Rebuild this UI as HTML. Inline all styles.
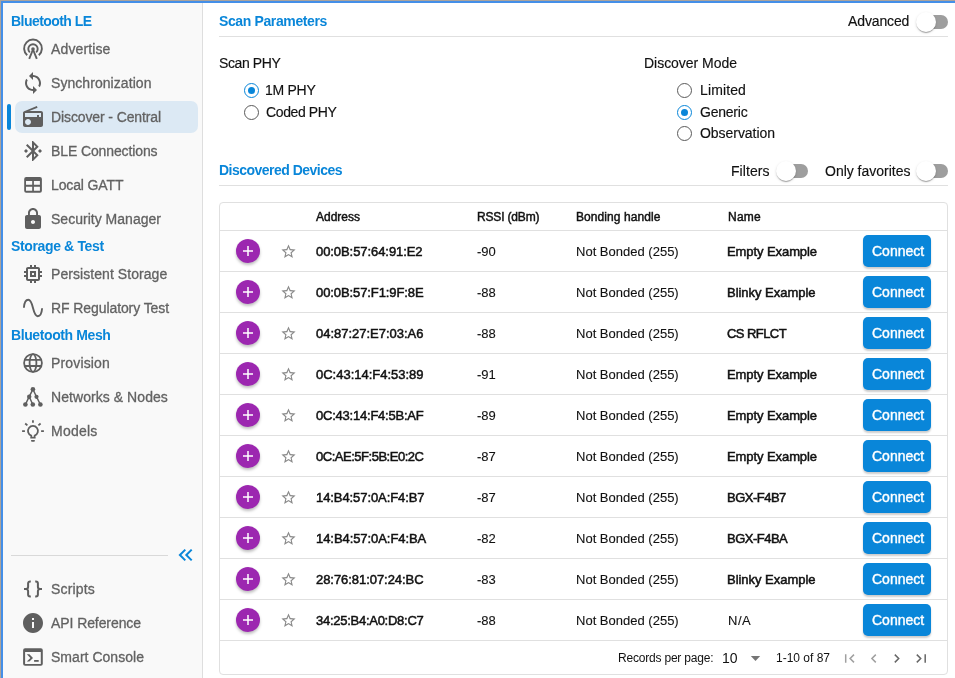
<!DOCTYPE html>
<html><head><meta charset="utf-8"><style>
html,body{margin:0;padding:0;}
body{width:955px;height:678px;overflow:hidden;position:relative;background:#fff;font-family:"Liberation Sans", sans-serif;}
.t{position:absolute;white-space:nowrap;will-change:transform;}
svg{display:block}
</style></head><body>
<div style="position:absolute;left:0px;top:0px;width:955px;height:678px;background:#fff"></div>
<div style="position:absolute;left:3px;top:3px;width:199px;height:675px;background:#f9f9f9"></div>
<div style="position:absolute;left:202px;top:3px;width:1px;height:675px;background:#dedede"></div>
<div class="t" style="left:11px;top:12.65px;font-size:14px;line-height:17px;font-weight:700;color:#0986d9;letter-spacing:-0.551px;">Bluetooth LE</div>
<div style="position:absolute;left:15px;top:101px;width:183px;height:32px;background:#dce9f4;border-radius:7px"></div>
<div style="position:absolute;left:7px;top:104px;width:4px;height:26px;background:#0986d9;border-radius:2px"></div>
<svg style="position:absolute;left:21px;top:37px;color:#5f5f5f" width="24" height="24" viewBox="0 0 24 24" fill="#5f5f5f"><g fill="none" stroke="currentColor" stroke-width="1.9"><path d="M6.2 18.2A8.9 8.9 0 1 1 17.8 18.2"/><path d="M8.8 15.4A4.7 4.7 0 1 1 15.2 15.4"/><path d="M12 12.5L8.2 21.8M12 12.5L15.8 21.8"/></g><circle cx="12" cy="12" r="1.8"/></svg>
<div class="t" style="left:51.3px;top:40.65px;font-size:14px;line-height:17px;font-weight:400;color:#626262;-webkit-text-stroke:0.3px #626262;letter-spacing:0.127px;">Advertise</div>
<svg style="position:absolute;left:21px;top:71px;color:#5f5f5f" width="24" height="24" viewBox="0 0 24 24" fill="#5f5f5f"><path d="M12 4V1L8 5l4 4V6c3.31 0 6 2.69 6 6 0 1.01-.25 1.97-.7 2.8l1.46 1.46C19.54 15.03 20 13.57 20 12c0-4.42-3.58-8-8-8zm0 14c-3.31 0-6-2.69-6-6 0-1.01.25-1.97.7-2.8L5.24 7.74C4.46 8.97 4 10.43 4 12c0 4.42 3.58 8 8 8v3l4-4-4-4v3z"/></svg>
<div class="t" style="left:51.3px;top:74.65px;font-size:14px;line-height:17px;font-weight:400;color:#626262;-webkit-text-stroke:0.3px #626262;letter-spacing:0.058px;">Synchronization</div>
<svg style="position:absolute;left:21px;top:105px;color:#5f5f5f" width="24" height="24" viewBox="0 0 24 24" fill="#5f5f5f"><path d="M3.24 6.15C2.51 6.43 2 7.17 2 8v12c0 1.1.89 2 2 2h16c1.11 0 2-.9 2-2V8c0-1.11-.89-2-2-2H8.3l8.26-3.34L15.88 1 3.24 6.15zM7 20c-1.66 0-3-1.34-3-3s1.34-3 3-3 3 1.34 3 3-1.34 3-3 3zm13-8h-2v-2h-2v2H4V8h16v4z"/></svg>
<div class="t" style="left:51.3px;top:108.65px;font-size:14px;line-height:17px;font-weight:400;color:#626262;-webkit-text-stroke:0.3px #626262;letter-spacing:-0.113px;">Discover - Central</div>
<svg style="position:absolute;left:21px;top:139px;color:#5f5f5f" width="24" height="24" viewBox="0 0 24 24" fill="#5f5f5f"><path d="M7 12l-2-2-2 2 2 2 2-2zm10.71-4.29L12 2h-1v7.59L6.41 5 5 6.41 10.59 12 5 17.59 6.41 19 11 14.41V22h1l5.71-5.71-4.3-4.29 4.3-4.29zM13 5.83l1.88 1.88L13 9.59V5.83zm1.88 10.46L13 18.17v-3.76l1.88 1.88zM19 10l-2 2 2 2 2-2-2-2z"/></svg>
<div class="t" style="left:51.3px;top:142.65px;font-size:14px;line-height:17px;font-weight:400;color:#626262;-webkit-text-stroke:0.3px #626262;letter-spacing:-0.113px;">BLE Connections</div>
<svg style="position:absolute;left:21px;top:173px;color:#5f5f5f" width="24" height="24" viewBox="0 0 24 24" fill="#5f5f5f"><path fill-rule="evenodd" d="M5.2 4.1h13.7a2 2 0 0 1 2 2v11.7a2 2 0 0 1-2 2H5.2a2 2 0 0 1-2-2V6.1a2 2 0 0 1 2-2zM5 8.1v3.7h6.2V8.1zm7.9 0v3.7h6V8.1zM5 13.8v4h6.2v-4zm7.9 0v4h6v-4z"/></svg>
<div class="t" style="left:51.3px;top:176.65px;font-size:14px;line-height:17px;font-weight:400;color:#626262;-webkit-text-stroke:0.3px #626262;letter-spacing:-0.126px;">Local GATT</div>
<svg style="position:absolute;left:21px;top:207px;color:#5f5f5f" width="24" height="24" viewBox="0 0 24 24" fill="#5f5f5f"><path d="M18 8h-1V6c0-2.76-2.24-5-5-5S7 3.24 7 6v2H6c-1.1 0-2 .9-2 2v10c0 1.1.9 2 2 2h12c1.1 0 2-.9 2-2V10c0-1.1-.9-2-2-2zm-6 9c-1.1 0-2-.9-2-2s.9-2 2-2 2 .9 2 2-.9 2-2 2zm3.1-9H8.9V6c0-1.71 1.39-3.1 3.1-3.1 1.71 0 3.1 1.39 3.1 3.1v2z"/></svg>
<div class="t" style="left:51.3px;top:210.65px;font-size:14px;line-height:17px;font-weight:400;color:#626262;-webkit-text-stroke:0.3px #626262;letter-spacing:0.018px;">Security Manager</div>
<div class="t" style="left:11px;top:237.65px;font-size:14px;line-height:17px;font-weight:700;color:#0986d9;letter-spacing:-0.362px;">Storage &amp; Test</div>
<svg style="position:absolute;left:21px;top:262px;color:#5f5f5f" width="24" height="24" viewBox="0 0 24 24" fill="#5f5f5f"><path d="M15 9H9v6h6V9zm-2 4h-2v-2h2v2zm8-2V9h-2V7c0-1.1-.9-2-2-2h-2V3h-2v2h-2V3H9v2H7c-1.1 0-2 .9-2 2v2H3v2h2v2H3v2h2v2c0 1.1.9 2 2 2h2v2h2v-2h2v2h2v-2h2c1.1 0 2-.9 2-2v-2h2v-2h-2v-2h2zm-4 6H7V7h10v10z"/></svg>
<div class="t" style="left:51.3px;top:265.65px;font-size:14px;line-height:17px;font-weight:400;color:#626262;-webkit-text-stroke:0.3px #626262;letter-spacing:0.063px;">Persistent Storage</div>
<svg style="position:absolute;left:21px;top:296px;color:#5f5f5f" width="24" height="24" viewBox="0 0 24 24" fill="#5f5f5f"><path fill="none" stroke="currentColor" stroke-width="1.9" d="M2.9 11.8C3.3 6.2 5 3.8 7.3 3.8 9.8 3.8 11 8 12 12s2.2 8.2 4.7 8.2c2.3 0 4-2.2 4.4-7.9"/></svg>
<div class="t" style="left:51.3px;top:299.65px;font-size:14px;line-height:17px;font-weight:400;color:#626262;-webkit-text-stroke:0.3px #626262;letter-spacing:-0.088px;">RF Regulatory Test</div>
<div class="t" style="left:11px;top:326.65px;font-size:14px;line-height:17px;font-weight:700;color:#0986d9;letter-spacing:-0.393px;">Bluetooth Mesh</div>
<svg style="position:absolute;left:21px;top:351px;color:#5f5f5f" width="24" height="24" viewBox="0 0 24 24" fill="#5f5f5f"><g fill="none" stroke="currentColor" stroke-width="1.8"><circle cx="12" cy="12" r="8.9"/><ellipse cx="12" cy="12" rx="3.4" ry="8.9"/><path d="M3.3 8.9h17.4M3.3 15h17.4"/></g></svg>
<div class="t" style="left:51.3px;top:354.65px;font-size:14px;line-height:17px;font-weight:400;color:#626262;-webkit-text-stroke:0.3px #626262;letter-spacing:0.156px;">Provision</div>
<svg style="position:absolute;left:21px;top:385px;color:#5f5f5f" width="24" height="24" viewBox="0 0 24 24" fill="#5f5f5f"><g fill="none" stroke="currentColor" stroke-width="1.5"><path d="M11.9 4.3L8.2 11.7 4.4 19.5M8.2 11.7L11.8 19.5M11.9 4.3L15.5 11.8 19.4 19.5"/></g><circle cx="11.9" cy="4.3" r="2.3"/><circle cx="8.2" cy="11.7" r="2.2"/><circle cx="15.5" cy="11.8" r="2.1"/><circle cx="4.4" cy="19.5" r="2.3"/><circle cx="11.8" cy="19.5" r="2.3"/><circle cx="19.4" cy="19.5" r="2.3"/></svg>
<div class="t" style="left:51.3px;top:388.65px;font-size:14px;line-height:17px;font-weight:400;color:#626262;-webkit-text-stroke:0.3px #626262;letter-spacing:0.060px;">Networks &amp; Nodes</div>
<svg style="position:absolute;left:21px;top:419px;color:#5f5f5f" width="24" height="24" viewBox="0 0 24 24" fill="#5f5f5f"><g fill="none" stroke="currentColor" stroke-width="1.8"><path d="M10.2 16.6V18.7H13.7V16.6A5 5 0 1 0 10.2 16.6Z"/><path d="M11.95 1.2v2.5M1.1 12.05h2.8M20.1 12.05h2.8M4.2 4.5l2.2 1.9M19.6 4.5l-2.2 1.9"/></g><path d="M10.1 21h3.7v0.9a0.8 0.8 0 0 1-0.8 0.8h-2.1a0.8 0.8 0 0 1-0.8-0.8z"/></svg>
<div class="t" style="left:51.3px;top:422.65px;font-size:14px;line-height:17px;font-weight:400;color:#626262;-webkit-text-stroke:0.3px #626262;letter-spacing:0.227px;">Models</div>
<div style="position:absolute;left:11px;top:555px;width:157px;height:1px;background:#d9d9d9"></div>
<svg style="position:absolute;left:173px;top:543px" width="24" height="24" viewBox="0 0 24 24" fill="none" stroke="#0986d9" stroke-width="2"><path d="M12.3 6.6L6.9 12l5.4 5.4M18.7 6.6L13.3 12l5.4 5.4"/></svg>
<svg style="position:absolute;left:21px;top:577px;color:#5f5f5f" width="24" height="24" viewBox="0 0 24 24" fill="#5f5f5f"><g fill="none" stroke="currentColor" stroke-width="2"><path d="M9.8 4.4H9.1A2 2 0 0 0 7.1 6.4V9.8A2.2 2.2 0 0 1 4.9 12H3M9.8 19.6H9.1A2 2 0 0 1 7.1 17.6V14.2A2.2 2.2 0 0 0 4.9 12"/><path d="M14.2 4.4h0.7a2 2 0 0 1 2 2V9.8a2.2 2.2 0 0 0 2.2 2.2H21M14.2 19.6h0.7a2 2 0 0 0 2-2V14.2a2.2 2.2 0 0 1 2.2-2.2"/></g></svg>
<div class="t" style="left:51.3px;top:580.65px;font-size:14px;line-height:17px;font-weight:400;color:#626262;-webkit-text-stroke:0.3px #626262;letter-spacing:0.172px;">Scripts</div>
<svg style="position:absolute;left:21px;top:611px;color:#5f5f5f" width="24" height="24" viewBox="0 0 24 24" fill="#5f5f5f"><path d="M12 2C6.48 2 2 6.48 2 12s4.48 10 10 10 10-4.48 10-10S17.52 2 12 2zm1 15h-2v-6h2v6zm0-8h-2V7h2v2z"/></svg>
<div class="t" style="left:51.3px;top:614.65px;font-size:14px;line-height:17px;font-weight:400;color:#626262;-webkit-text-stroke:0.3px #626262;letter-spacing:-0.082px;">API Reference</div>
<svg style="position:absolute;left:21px;top:645px;color:#5f5f5f" width="24" height="24" viewBox="0 0 24 24" fill="#5f5f5f"><path fill-rule="evenodd" d="M4.1 3.2h15.7a2 2 0 0 1 2 2v13.5a2 2 0 0 1-2 2H4.1a2 2 0 0 1-2-2V5.2a2 2 0 0 1 2-2zM4.1 6.9v12h15.7v-12z"/><path d="M5.8 9.2h2.6l3.6 3.7-3.6 3.7H5.8l3.6-3.7z"/><path d="M13.1 15h4.6v1.8h-4.6z"/></svg>
<div class="t" style="left:51.3px;top:648.65px;font-size:14px;line-height:17px;font-weight:400;color:#626262;-webkit-text-stroke:0.3px #626262;letter-spacing:0.031px;">Smart Console</div>
<div class="t" style="left:219px;top:13.05px;font-size:14px;line-height:17px;font-weight:700;color:#0986d9;letter-spacing:-0.376px;">Scan Parameters</div>
<div class="t" style="left:848px;top:13.15px;font-size:14px;line-height:17px;font-weight:400;color:#111;-webkit-text-stroke:0.15px #111;letter-spacing:-0.123px;">Advanced</div>
<div style="position:absolute;left:920px;top:15px;width:28px;height:14px;background:#9e9e9e;border-radius:7px"></div>
<div style="position:absolute;left:916px;top:12px;width:20px;height:20px;background:#fff;border-radius:50%;box-shadow:0 2px 1px -1px rgba(0,0,0,.2),0 1px 1px 0 rgba(0,0,0,.14),0 1px 3px 0 rgba(0,0,0,.12)"></div>
<div style="position:absolute;left:219px;top:36px;width:729px;height:1px;background:#e0e0e0"></div>
<div class="t" style="left:219px;top:55.15px;font-size:14px;line-height:17px;font-weight:400;color:#111;-webkit-text-stroke:0.15px #111;letter-spacing:-0.387px;">Scan PHY</div>
<div style="position:absolute;left:243.9px;top:82.9px;width:15px;height:15px;box-sizing:border-box;border:1.8px solid #0986d9;border-radius:50%"></div>
<div style="position:absolute;left:247.65px;top:86.65px;width:7.5px;height:7.5px;background:#0986d9;border-radius:50%"></div>
<div class="t" style="left:265px;top:82.15px;font-size:14px;line-height:17px;font-weight:400;color:#111;-webkit-text-stroke:0.15px #111;letter-spacing:-0.271px;">1M PHY</div>
<div style="position:absolute;left:243.9px;top:104.9px;width:15px;height:15px;box-sizing:border-box;border:1.5px solid #5a5a5a;border-radius:50%"></div>
<div class="t" style="left:265.5px;top:104.15px;font-size:14px;line-height:17px;font-weight:400;color:#111;-webkit-text-stroke:0.15px #111;letter-spacing:-0.382px;">Coded PHY</div>
<div class="t" style="left:644px;top:55.45px;font-size:14px;line-height:17px;font-weight:400;color:#111;-webkit-text-stroke:0.15px #111;letter-spacing:-0.029px;">Discover Mode</div>
<div style="position:absolute;left:677.0px;top:83.0px;width:15px;height:15px;box-sizing:border-box;border:1.5px solid #5a5a5a;border-radius:50%"></div>
<div class="t" style="left:700px;top:82.15px;font-size:14px;line-height:17px;font-weight:400;color:#111;-webkit-text-stroke:0.15px #111;letter-spacing:0.123px;">Limited</div>
<div style="position:absolute;left:677.0px;top:104.9px;width:15px;height:15px;box-sizing:border-box;border:1.8px solid #0986d9;border-radius:50%"></div>
<div style="position:absolute;left:680.75px;top:108.65px;width:7.5px;height:7.5px;background:#0986d9;border-radius:50%"></div>
<div class="t" style="left:700px;top:104.15px;font-size:14px;line-height:17px;font-weight:400;color:#111;-webkit-text-stroke:0.15px #111;letter-spacing:-0.219px;">Generic</div>
<div style="position:absolute;left:677.0px;top:125.69999999999999px;width:15px;height:15px;box-sizing:border-box;border:1.5px solid #5a5a5a;border-radius:50%"></div>
<div class="t" style="left:700px;top:125.15px;font-size:14px;line-height:17px;font-weight:400;color:#111;-webkit-text-stroke:0.15px #111;letter-spacing:-0.044px;">Observation</div>
<div class="t" style="left:218.5px;top:162.15px;font-size:14px;line-height:17px;font-weight:700;color:#0986d9;letter-spacing:-0.517px;">Discovered Devices</div>
<div class="t" style="left:731px;top:162.95px;font-size:14px;line-height:17px;font-weight:400;color:#111;-webkit-text-stroke:0.15px #111;letter-spacing:0.054px;">Filters</div>
<div style="position:absolute;left:780px;top:164px;width:28px;height:14px;background:#9e9e9e;border-radius:7px"></div>
<div style="position:absolute;left:776px;top:161px;width:20px;height:20px;background:#fff;border-radius:50%;box-shadow:0 2px 1px -1px rgba(0,0,0,.2),0 1px 1px 0 rgba(0,0,0,.14),0 1px 3px 0 rgba(0,0,0,.12)"></div>
<div class="t" style="left:824.6px;top:162.95px;font-size:14px;line-height:17px;font-weight:400;color:#111;-webkit-text-stroke:0.15px #111;letter-spacing:-0.014px;">Only favorites</div>
<div style="position:absolute;left:920px;top:164px;width:28px;height:14px;background:#9e9e9e;border-radius:7px"></div>
<div style="position:absolute;left:916px;top:161px;width:20px;height:20px;background:#fff;border-radius:50%;box-shadow:0 2px 1px -1px rgba(0,0,0,.2),0 1px 1px 0 rgba(0,0,0,.14),0 1px 3px 0 rgba(0,0,0,.12)"></div>
<div style="position:absolute;left:219px;top:185px;width:729px;height:1px;background:#e0e0e0"></div>
<div style="position:absolute;left:219px;top:202px;width:729px;height:473px;box-sizing:border-box;border:1px solid #e0e0e0;border-radius:4px"></div>
<div class="t" style="left:315.5px;top:209.84px;font-size:12px;line-height:14px;font-weight:400;color:#111;-webkit-text-stroke:0.45px #111;letter-spacing:-0.004px;">Address</div>
<div class="t" style="left:476.7px;top:209.84px;font-size:12px;line-height:14px;font-weight:400;color:#111;-webkit-text-stroke:0.45px #111;letter-spacing:-0.172px;">RSSI (dBm)</div>
<div class="t" style="left:575.7px;top:209.84px;font-size:12px;line-height:14px;font-weight:400;color:#111;-webkit-text-stroke:0.45px #111;letter-spacing:0.070px;">Bonding handle</div>
<div class="t" style="left:727.5px;top:209.84px;font-size:12px;line-height:14px;font-weight:400;color:#111;-webkit-text-stroke:0.45px #111;letter-spacing:0.246px;">Name</div>
<div style="position:absolute;left:220px;top:230px;width:727px;height:1px;background:#e0e0e0"></div>
<div style="position:absolute;left:220px;top:271px;width:727px;height:1px;background:#e0e0e0"></div>
<div style="position:absolute;left:220px;top:312px;width:727px;height:1px;background:#e0e0e0"></div>
<div style="position:absolute;left:220px;top:353px;width:727px;height:1px;background:#e0e0e0"></div>
<div style="position:absolute;left:220px;top:394px;width:727px;height:1px;background:#e0e0e0"></div>
<div style="position:absolute;left:220px;top:435px;width:727px;height:1px;background:#e0e0e0"></div>
<div style="position:absolute;left:220px;top:476px;width:727px;height:1px;background:#e0e0e0"></div>
<div style="position:absolute;left:220px;top:517px;width:727px;height:1px;background:#e0e0e0"></div>
<div style="position:absolute;left:220px;top:558px;width:727px;height:1px;background:#e0e0e0"></div>
<div style="position:absolute;left:220px;top:599px;width:727px;height:1px;background:#e0e0e0"></div>
<div style="position:absolute;left:220px;top:640px;width:727px;height:1px;background:#e0e0e0"></div>
<div style="position:absolute;left:236px;top:239px;width:24px;height:24px;background:#9c27b0;border-radius:50%;box-shadow:0 2px 3px rgba(0,0,0,.25)"></div>
<svg style="position:absolute;left:236px;top:239px" width="24" height="24" viewBox="0 0 24 24"><path d="M12 7v10M7 12h10" stroke="#fff" stroke-width="1.5"/></svg>
<svg style="position:absolute;left:279.5px;top:242.7px" width="17" height="17" viewBox="0 0 24 24"><path fill="#8a8a8a" d="M22 9.24l-7.19-.62L12 2 9.19 8.63 2 9.24l5.46 4.73L5.82 21 12 17.27 18.18 21l-1.63-7.03L22 9.24zM12 15.4l-3.76 2.27 1-4.28-3.32-2.88 4.38-.38L12 6.1l1.71 4.04 4.38.38-3.32 2.88 1 4.28L12 15.4z"/></svg>
<div class="t" style="left:315.5px;top:243.69px;font-size:13px;line-height:16px;font-weight:400;color:#111;-webkit-text-stroke:0.5px #111;letter-spacing:-0.071px;">00:0B:57:64:91:E2</div>
<div class="t" style="left:476.7px;top:243.69px;font-size:13px;line-height:16px;font-weight:400;color:#111;-webkit-text-stroke:0.1px #111;">-90</div>
<div class="t" style="left:575.5px;top:243.69px;font-size:13px;line-height:16px;font-weight:400;color:#111;-webkit-text-stroke:0.1px #111;letter-spacing:0.005px;">Not Bonded (255)</div>
<div class="t" style="left:727.3px;top:243.69px;font-size:13px;line-height:16px;font-weight:400;color:#111;-webkit-text-stroke:0.5px #111;letter-spacing:-0.081px;">Empty Example</div>
<div style="position:absolute;left:863px;top:235px;width:68px;height:32px;background:#0986d9;border-radius:5px;box-shadow:0 2px 2px rgba(0,0,0,.2)"></div>
<div class="t" style="left:872px;top:243.25px;font-size:14px;line-height:17px;font-weight:400;color:#fff;-webkit-text-stroke:0.4px #fff;letter-spacing:0.006px;">Connect</div>
<div style="position:absolute;left:236px;top:280px;width:24px;height:24px;background:#9c27b0;border-radius:50%;box-shadow:0 2px 3px rgba(0,0,0,.25)"></div>
<svg style="position:absolute;left:236px;top:280px" width="24" height="24" viewBox="0 0 24 24"><path d="M12 7v10M7 12h10" stroke="#fff" stroke-width="1.5"/></svg>
<svg style="position:absolute;left:279.5px;top:283.7px" width="17" height="17" viewBox="0 0 24 24"><path fill="#8a8a8a" d="M22 9.24l-7.19-.62L12 2 9.19 8.63 2 9.24l5.46 4.73L5.82 21 12 17.27 18.18 21l-1.63-7.03L22 9.24zM12 15.4l-3.76 2.27 1-4.28-3.32-2.88 4.38-.38L12 6.1l1.71 4.04 4.38.38-3.32 2.88 1 4.28L12 15.4z"/></svg>
<div class="t" style="left:315.5px;top:284.69px;font-size:13px;line-height:16px;font-weight:400;color:#111;-webkit-text-stroke:0.5px #111;letter-spacing:-0.096px;">00:0B:57:F1:9F:8E</div>
<div class="t" style="left:476.7px;top:284.69px;font-size:13px;line-height:16px;font-weight:400;color:#111;-webkit-text-stroke:0.1px #111;">-88</div>
<div class="t" style="left:575.5px;top:284.69px;font-size:13px;line-height:16px;font-weight:400;color:#111;-webkit-text-stroke:0.1px #111;letter-spacing:0.005px;">Not Bonded (255)</div>
<div class="t" style="left:727.3px;top:284.69px;font-size:13px;line-height:16px;font-weight:400;color:#111;-webkit-text-stroke:0.5px #111;letter-spacing:-0.027px;">Blinky Example</div>
<div style="position:absolute;left:863px;top:276px;width:68px;height:32px;background:#0986d9;border-radius:5px;box-shadow:0 2px 2px rgba(0,0,0,.2)"></div>
<div class="t" style="left:872px;top:284.25px;font-size:14px;line-height:17px;font-weight:400;color:#fff;-webkit-text-stroke:0.4px #fff;letter-spacing:0.006px;">Connect</div>
<div style="position:absolute;left:236px;top:321px;width:24px;height:24px;background:#9c27b0;border-radius:50%;box-shadow:0 2px 3px rgba(0,0,0,.25)"></div>
<svg style="position:absolute;left:236px;top:321px" width="24" height="24" viewBox="0 0 24 24"><path d="M12 7v10M7 12h10" stroke="#fff" stroke-width="1.5"/></svg>
<svg style="position:absolute;left:279.5px;top:324.7px" width="17" height="17" viewBox="0 0 24 24"><path fill="#8a8a8a" d="M22 9.24l-7.19-.62L12 2 9.19 8.63 2 9.24l5.46 4.73L5.82 21 12 17.27 18.18 21l-1.63-7.03L22 9.24zM12 15.4l-3.76 2.27 1-4.28-3.32-2.88 4.38-.38L12 6.1l1.71 4.04 4.38.38-3.32 2.88 1 4.28L12 15.4z"/></svg>
<div class="t" style="left:315.5px;top:325.69px;font-size:13px;line-height:16px;font-weight:400;color:#111;-webkit-text-stroke:0.5px #111;letter-spacing:-0.012px;">04:87:27:E7:03:A6</div>
<div class="t" style="left:476.7px;top:325.69px;font-size:13px;line-height:16px;font-weight:400;color:#111;-webkit-text-stroke:0.1px #111;">-88</div>
<div class="t" style="left:575.5px;top:325.69px;font-size:13px;line-height:16px;font-weight:400;color:#111;-webkit-text-stroke:0.1px #111;letter-spacing:0.005px;">Not Bonded (255)</div>
<div class="t" style="left:727.3px;top:325.69px;font-size:13px;line-height:16px;font-weight:400;color:#111;-webkit-text-stroke:0.5px #111;letter-spacing:-0.570px;">CS RFLCT</div>
<div style="position:absolute;left:863px;top:317px;width:68px;height:32px;background:#0986d9;border-radius:5px;box-shadow:0 2px 2px rgba(0,0,0,.2)"></div>
<div class="t" style="left:872px;top:325.25px;font-size:14px;line-height:17px;font-weight:400;color:#fff;-webkit-text-stroke:0.4px #fff;letter-spacing:0.006px;">Connect</div>
<div style="position:absolute;left:236px;top:362px;width:24px;height:24px;background:#9c27b0;border-radius:50%;box-shadow:0 2px 3px rgba(0,0,0,.25)"></div>
<svg style="position:absolute;left:236px;top:362px" width="24" height="24" viewBox="0 0 24 24"><path d="M12 7v10M7 12h10" stroke="#fff" stroke-width="1.5"/></svg>
<svg style="position:absolute;left:279.5px;top:365.7px" width="17" height="17" viewBox="0 0 24 24"><path fill="#8a8a8a" d="M22 9.24l-7.19-.62L12 2 9.19 8.63 2 9.24l5.46 4.73L5.82 21 12 17.27 18.18 21l-1.63-7.03L22 9.24zM12 15.4l-3.76 2.27 1-4.28-3.32-2.88 4.38-.38L12 6.1l1.71 4.04 4.38.38-3.32 2.88 1 4.28L12 15.4z"/></svg>
<div class="t" style="left:315.5px;top:366.69px;font-size:13px;line-height:16px;font-weight:400;color:#111;-webkit-text-stroke:0.5px #111;letter-spacing:-0.012px;">0C:43:14:F4:53:89</div>
<div class="t" style="left:476.7px;top:366.69px;font-size:13px;line-height:16px;font-weight:400;color:#111;-webkit-text-stroke:0.1px #111;">-91</div>
<div class="t" style="left:575.5px;top:366.69px;font-size:13px;line-height:16px;font-weight:400;color:#111;-webkit-text-stroke:0.1px #111;letter-spacing:0.005px;">Not Bonded (255)</div>
<div class="t" style="left:727.3px;top:366.69px;font-size:13px;line-height:16px;font-weight:400;color:#111;-webkit-text-stroke:0.5px #111;letter-spacing:-0.081px;">Empty Example</div>
<div style="position:absolute;left:863px;top:358px;width:68px;height:32px;background:#0986d9;border-radius:5px;box-shadow:0 2px 2px rgba(0,0,0,.2)"></div>
<div class="t" style="left:872px;top:366.25px;font-size:14px;line-height:17px;font-weight:400;color:#fff;-webkit-text-stroke:0.4px #fff;letter-spacing:0.006px;">Connect</div>
<div style="position:absolute;left:236px;top:403px;width:24px;height:24px;background:#9c27b0;border-radius:50%;box-shadow:0 2px 3px rgba(0,0,0,.25)"></div>
<svg style="position:absolute;left:236px;top:403px" width="24" height="24" viewBox="0 0 24 24"><path d="M12 7v10M7 12h10" stroke="#fff" stroke-width="1.5"/></svg>
<svg style="position:absolute;left:279.5px;top:406.7px" width="17" height="17" viewBox="0 0 24 24"><path fill="#8a8a8a" d="M22 9.24l-7.19-.62L12 2 9.19 8.63 2 9.24l5.46 4.73L5.82 21 12 17.27 18.18 21l-1.63-7.03L22 9.24zM12 15.4l-3.76 2.27 1-4.28-3.32-2.88 4.38-.38L12 6.1l1.71 4.04 4.38.38-3.32 2.88 1 4.28L12 15.4z"/></svg>
<div class="t" style="left:315.5px;top:407.69px;font-size:13px;line-height:16px;font-weight:400;color:#111;-webkit-text-stroke:0.5px #111;letter-spacing:-0.222px;">0C:43:14:F4:5B:AF</div>
<div class="t" style="left:476.7px;top:407.69px;font-size:13px;line-height:16px;font-weight:400;color:#111;-webkit-text-stroke:0.1px #111;">-89</div>
<div class="t" style="left:575.5px;top:407.69px;font-size:13px;line-height:16px;font-weight:400;color:#111;-webkit-text-stroke:0.1px #111;letter-spacing:0.005px;">Not Bonded (255)</div>
<div class="t" style="left:727.3px;top:407.69px;font-size:13px;line-height:16px;font-weight:400;color:#111;-webkit-text-stroke:0.5px #111;letter-spacing:-0.081px;">Empty Example</div>
<div style="position:absolute;left:863px;top:399px;width:68px;height:32px;background:#0986d9;border-radius:5px;box-shadow:0 2px 2px rgba(0,0,0,.2)"></div>
<div class="t" style="left:872px;top:407.25px;font-size:14px;line-height:17px;font-weight:400;color:#fff;-webkit-text-stroke:0.4px #fff;letter-spacing:0.006px;">Connect</div>
<div style="position:absolute;left:236px;top:444px;width:24px;height:24px;background:#9c27b0;border-radius:50%;box-shadow:0 2px 3px rgba(0,0,0,.25)"></div>
<svg style="position:absolute;left:236px;top:444px" width="24" height="24" viewBox="0 0 24 24"><path d="M12 7v10M7 12h10" stroke="#fff" stroke-width="1.5"/></svg>
<svg style="position:absolute;left:279.5px;top:447.7px" width="17" height="17" viewBox="0 0 24 24"><path fill="#8a8a8a" d="M22 9.24l-7.19-.62L12 2 9.19 8.63 2 9.24l5.46 4.73L5.82 21 12 17.27 18.18 21l-1.63-7.03L22 9.24zM12 15.4l-3.76 2.27 1-4.28-3.32-2.88 4.38-.38L12 6.1l1.71 4.04 4.38.38-3.32 2.88 1 4.28L12 15.4z"/></svg>
<div class="t" style="left:315.5px;top:448.69px;font-size:13px;line-height:16px;font-weight:400;color:#111;-webkit-text-stroke:0.5px #111;letter-spacing:-0.478px;">0C:AE:5F:5B:E0:2C</div>
<div class="t" style="left:476.7px;top:448.69px;font-size:13px;line-height:16px;font-weight:400;color:#111;-webkit-text-stroke:0.1px #111;">-87</div>
<div class="t" style="left:575.5px;top:448.69px;font-size:13px;line-height:16px;font-weight:400;color:#111;-webkit-text-stroke:0.1px #111;letter-spacing:0.005px;">Not Bonded (255)</div>
<div class="t" style="left:727.3px;top:448.69px;font-size:13px;line-height:16px;font-weight:400;color:#111;-webkit-text-stroke:0.5px #111;letter-spacing:-0.081px;">Empty Example</div>
<div style="position:absolute;left:863px;top:440px;width:68px;height:32px;background:#0986d9;border-radius:5px;box-shadow:0 2px 2px rgba(0,0,0,.2)"></div>
<div class="t" style="left:872px;top:448.25px;font-size:14px;line-height:17px;font-weight:400;color:#fff;-webkit-text-stroke:0.4px #fff;letter-spacing:0.006px;">Connect</div>
<div style="position:absolute;left:236px;top:485px;width:24px;height:24px;background:#9c27b0;border-radius:50%;box-shadow:0 2px 3px rgba(0,0,0,.25)"></div>
<svg style="position:absolute;left:236px;top:485px" width="24" height="24" viewBox="0 0 24 24"><path d="M12 7v10M7 12h10" stroke="#fff" stroke-width="1.5"/></svg>
<svg style="position:absolute;left:279.5px;top:488.7px" width="17" height="17" viewBox="0 0 24 24"><path fill="#8a8a8a" d="M22 9.24l-7.19-.62L12 2 9.19 8.63 2 9.24l5.46 4.73L5.82 21 12 17.27 18.18 21l-1.63-7.03L22 9.24zM12 15.4l-3.76 2.27 1-4.28-3.32-2.88 4.38-.38L12 6.1l1.71 4.04 4.38.38-3.32 2.88 1 4.28L12 15.4z"/></svg>
<div class="t" style="left:315.5px;top:489.69px;font-size:13px;line-height:16px;font-weight:400;color:#111;-webkit-text-stroke:0.5px #111;letter-spacing:-0.080px;">14:B4:57:0A:F4:B7</div>
<div class="t" style="left:476.7px;top:489.69px;font-size:13px;line-height:16px;font-weight:400;color:#111;-webkit-text-stroke:0.1px #111;">-87</div>
<div class="t" style="left:575.5px;top:489.69px;font-size:13px;line-height:16px;font-weight:400;color:#111;-webkit-text-stroke:0.1px #111;letter-spacing:0.005px;">Not Bonded (255)</div>
<div class="t" style="left:727.3px;top:489.69px;font-size:13px;line-height:16px;font-weight:400;color:#111;-webkit-text-stroke:0.5px #111;letter-spacing:-0.507px;">BGX-F4B7</div>
<div style="position:absolute;left:863px;top:481px;width:68px;height:32px;background:#0986d9;border-radius:5px;box-shadow:0 2px 2px rgba(0,0,0,.2)"></div>
<div class="t" style="left:872px;top:489.25px;font-size:14px;line-height:17px;font-weight:400;color:#fff;-webkit-text-stroke:0.4px #fff;letter-spacing:0.006px;">Connect</div>
<div style="position:absolute;left:236px;top:526px;width:24px;height:24px;background:#9c27b0;border-radius:50%;box-shadow:0 2px 3px rgba(0,0,0,.25)"></div>
<svg style="position:absolute;left:236px;top:526px" width="24" height="24" viewBox="0 0 24 24"><path d="M12 7v10M7 12h10" stroke="#fff" stroke-width="1.5"/></svg>
<svg style="position:absolute;left:279.5px;top:529.7px" width="17" height="17" viewBox="0 0 24 24"><path fill="#8a8a8a" d="M22 9.24l-7.19-.62L12 2 9.19 8.63 2 9.24l5.46 4.73L5.82 21 12 17.27 18.18 21l-1.63-7.03L22 9.24zM12 15.4l-3.76 2.27 1-4.28-3.32-2.88 4.38-.38L12 6.1l1.71 4.04 4.38.38-3.32 2.88 1 4.28L12 15.4z"/></svg>
<div class="t" style="left:315.5px;top:530.69px;font-size:13px;line-height:16px;font-weight:400;color:#111;-webkit-text-stroke:0.5px #111;letter-spacing:-0.065px;">14:B4:57:0A:F4:BA</div>
<div class="t" style="left:476.7px;top:530.69px;font-size:13px;line-height:16px;font-weight:400;color:#111;-webkit-text-stroke:0.1px #111;">-82</div>
<div class="t" style="left:575.5px;top:530.69px;font-size:13px;line-height:16px;font-weight:400;color:#111;-webkit-text-stroke:0.1px #111;letter-spacing:0.005px;">Not Bonded (255)</div>
<div class="t" style="left:727.3px;top:530.69px;font-size:13px;line-height:16px;font-weight:400;color:#111;-webkit-text-stroke:0.5px #111;letter-spacing:-0.512px;">BGX-F4BA</div>
<div style="position:absolute;left:863px;top:522px;width:68px;height:32px;background:#0986d9;border-radius:5px;box-shadow:0 2px 2px rgba(0,0,0,.2)"></div>
<div class="t" style="left:872px;top:530.25px;font-size:14px;line-height:17px;font-weight:400;color:#fff;-webkit-text-stroke:0.4px #fff;letter-spacing:0.006px;">Connect</div>
<div style="position:absolute;left:236px;top:567px;width:24px;height:24px;background:#9c27b0;border-radius:50%;box-shadow:0 2px 3px rgba(0,0,0,.25)"></div>
<svg style="position:absolute;left:236px;top:567px" width="24" height="24" viewBox="0 0 24 24"><path d="M12 7v10M7 12h10" stroke="#fff" stroke-width="1.5"/></svg>
<svg style="position:absolute;left:279.5px;top:570.7px" width="17" height="17" viewBox="0 0 24 24"><path fill="#8a8a8a" d="M22 9.24l-7.19-.62L12 2 9.19 8.63 2 9.24l5.46 4.73L5.82 21 12 17.27 18.18 21l-1.63-7.03L22 9.24zM12 15.4l-3.76 2.27 1-4.28-3.32-2.88 4.38-.38L12 6.1l1.71 4.04 4.38.38-3.32 2.88 1 4.28L12 15.4z"/></svg>
<div class="t" style="left:315.5px;top:571.69px;font-size:13px;line-height:16px;font-weight:400;color:#111;-webkit-text-stroke:0.5px #111;letter-spacing:-0.054px;">28:76:81:07:24:BC</div>
<div class="t" style="left:476.7px;top:571.69px;font-size:13px;line-height:16px;font-weight:400;color:#111;-webkit-text-stroke:0.1px #111;">-83</div>
<div class="t" style="left:575.5px;top:571.69px;font-size:13px;line-height:16px;font-weight:400;color:#111;-webkit-text-stroke:0.1px #111;letter-spacing:0.005px;">Not Bonded (255)</div>
<div class="t" style="left:727.3px;top:571.69px;font-size:13px;line-height:16px;font-weight:400;color:#111;-webkit-text-stroke:0.5px #111;letter-spacing:-0.027px;">Blinky Example</div>
<div style="position:absolute;left:863px;top:563px;width:68px;height:32px;background:#0986d9;border-radius:5px;box-shadow:0 2px 2px rgba(0,0,0,.2)"></div>
<div class="t" style="left:872px;top:571.25px;font-size:14px;line-height:17px;font-weight:400;color:#fff;-webkit-text-stroke:0.4px #fff;letter-spacing:0.006px;">Connect</div>
<div style="position:absolute;left:236px;top:608px;width:24px;height:24px;background:#9c27b0;border-radius:50%;box-shadow:0 2px 3px rgba(0,0,0,.25)"></div>
<svg style="position:absolute;left:236px;top:608px" width="24" height="24" viewBox="0 0 24 24"><path d="M12 7v10M7 12h10" stroke="#fff" stroke-width="1.5"/></svg>
<svg style="position:absolute;left:279.5px;top:611.7px" width="17" height="17" viewBox="0 0 24 24"><path fill="#8a8a8a" d="M22 9.24l-7.19-.62L12 2 9.19 8.63 2 9.24l5.46 4.73L5.82 21 12 17.27 18.18 21l-1.63-7.03L22 9.24zM12 15.4l-3.76 2.27 1-4.28-3.32-2.88 4.38-.38L12 6.1l1.71 4.04 4.38.38-3.32 2.88 1 4.28L12 15.4z"/></svg>
<div class="t" style="left:315.5px;top:612.69px;font-size:13px;line-height:16px;font-weight:400;color:#111;-webkit-text-stroke:0.5px #111;letter-spacing:-0.267px;">34:25:B4:A0:D8:C7</div>
<div class="t" style="left:476.7px;top:612.69px;font-size:13px;line-height:16px;font-weight:400;color:#111;-webkit-text-stroke:0.1px #111;">-88</div>
<div class="t" style="left:575.5px;top:612.69px;font-size:13px;line-height:16px;font-weight:400;color:#111;-webkit-text-stroke:0.1px #111;letter-spacing:0.005px;">Not Bonded (255)</div>
<div class="t" style="left:728.3px;top:612.69px;font-size:13px;line-height:16px;font-weight:400;color:#111;-webkit-text-stroke:0.1px #111;letter-spacing:0.543px;">N/A</div>
<div style="position:absolute;left:863px;top:604px;width:68px;height:32px;background:#0986d9;border-radius:5px;box-shadow:0 2px 2px rgba(0,0,0,.2)"></div>
<div class="t" style="left:872px;top:612.25px;font-size:14px;line-height:17px;font-weight:400;color:#fff;-webkit-text-stroke:0.4px #fff;letter-spacing:0.006px;">Connect</div>
<div class="t" style="left:617.5px;top:651.14px;font-size:12px;line-height:14px;font-weight:400;color:#111;letter-spacing:-0.2px;">Records per page:</div>
<div class="t" style="left:722px;top:649.65px;font-size:14px;line-height:17px;font-weight:400;color:#111;">10</div>
<svg style="position:absolute;left:750px;top:655px" width="11" height="7" viewBox="0 0 11 7"><path d="M0.8 1h9.4L5.5 6z" fill="#757575"/></svg>
<div class="t" style="left:776px;top:651.14px;font-size:12px;line-height:14px;font-weight:400;color:#111;">1-10 of 87</div>
<svg style="position:absolute;left:843px;top:650px" width="16" height="16" viewBox="0 0 16 16" fill="none" stroke="#a0a0a0" stroke-width="1.5"><path d="M2.7 4.2v8.6M11 4.6L7.1 8.5 11 12.4"/></svg>
<svg style="position:absolute;left:865px;top:650px" width="16" height="16" viewBox="0 0 16 16" fill="none" stroke="#a0a0a0" stroke-width="1.5"><path d="M10.8 4.6L6.9 8.5 10.8 12.4"/></svg>
<svg style="position:absolute;left:889px;top:650px" width="16" height="16" viewBox="0 0 16 16" fill="none" stroke="#666" stroke-width="1.5"><path d="M5.8 4.6L9.7 8.5 5.8 12.4"/></svg>
<svg style="position:absolute;left:911px;top:650px" width="16" height="16" viewBox="0 0 16 16" fill="none" stroke="#666" stroke-width="1.5"><path d="M5.8 4.6L9.7 8.5 5.8 12.4M14.2 4.2v8.6"/></svg>
<div style="position:absolute;left:0px;top:0px;width:955px;height:1px;background:#aba39c"></div>
<div style="position:absolute;left:0px;top:0px;width:1px;height:678px;background:#aba39c"></div>
<div style="position:absolute;left:1px;top:1px;width:954px;height:2px;background:#448fe8"></div>
<div style="position:absolute;left:1px;top:1px;width:2px;height:677px;background:#448fe8"></div>
</body></html>
